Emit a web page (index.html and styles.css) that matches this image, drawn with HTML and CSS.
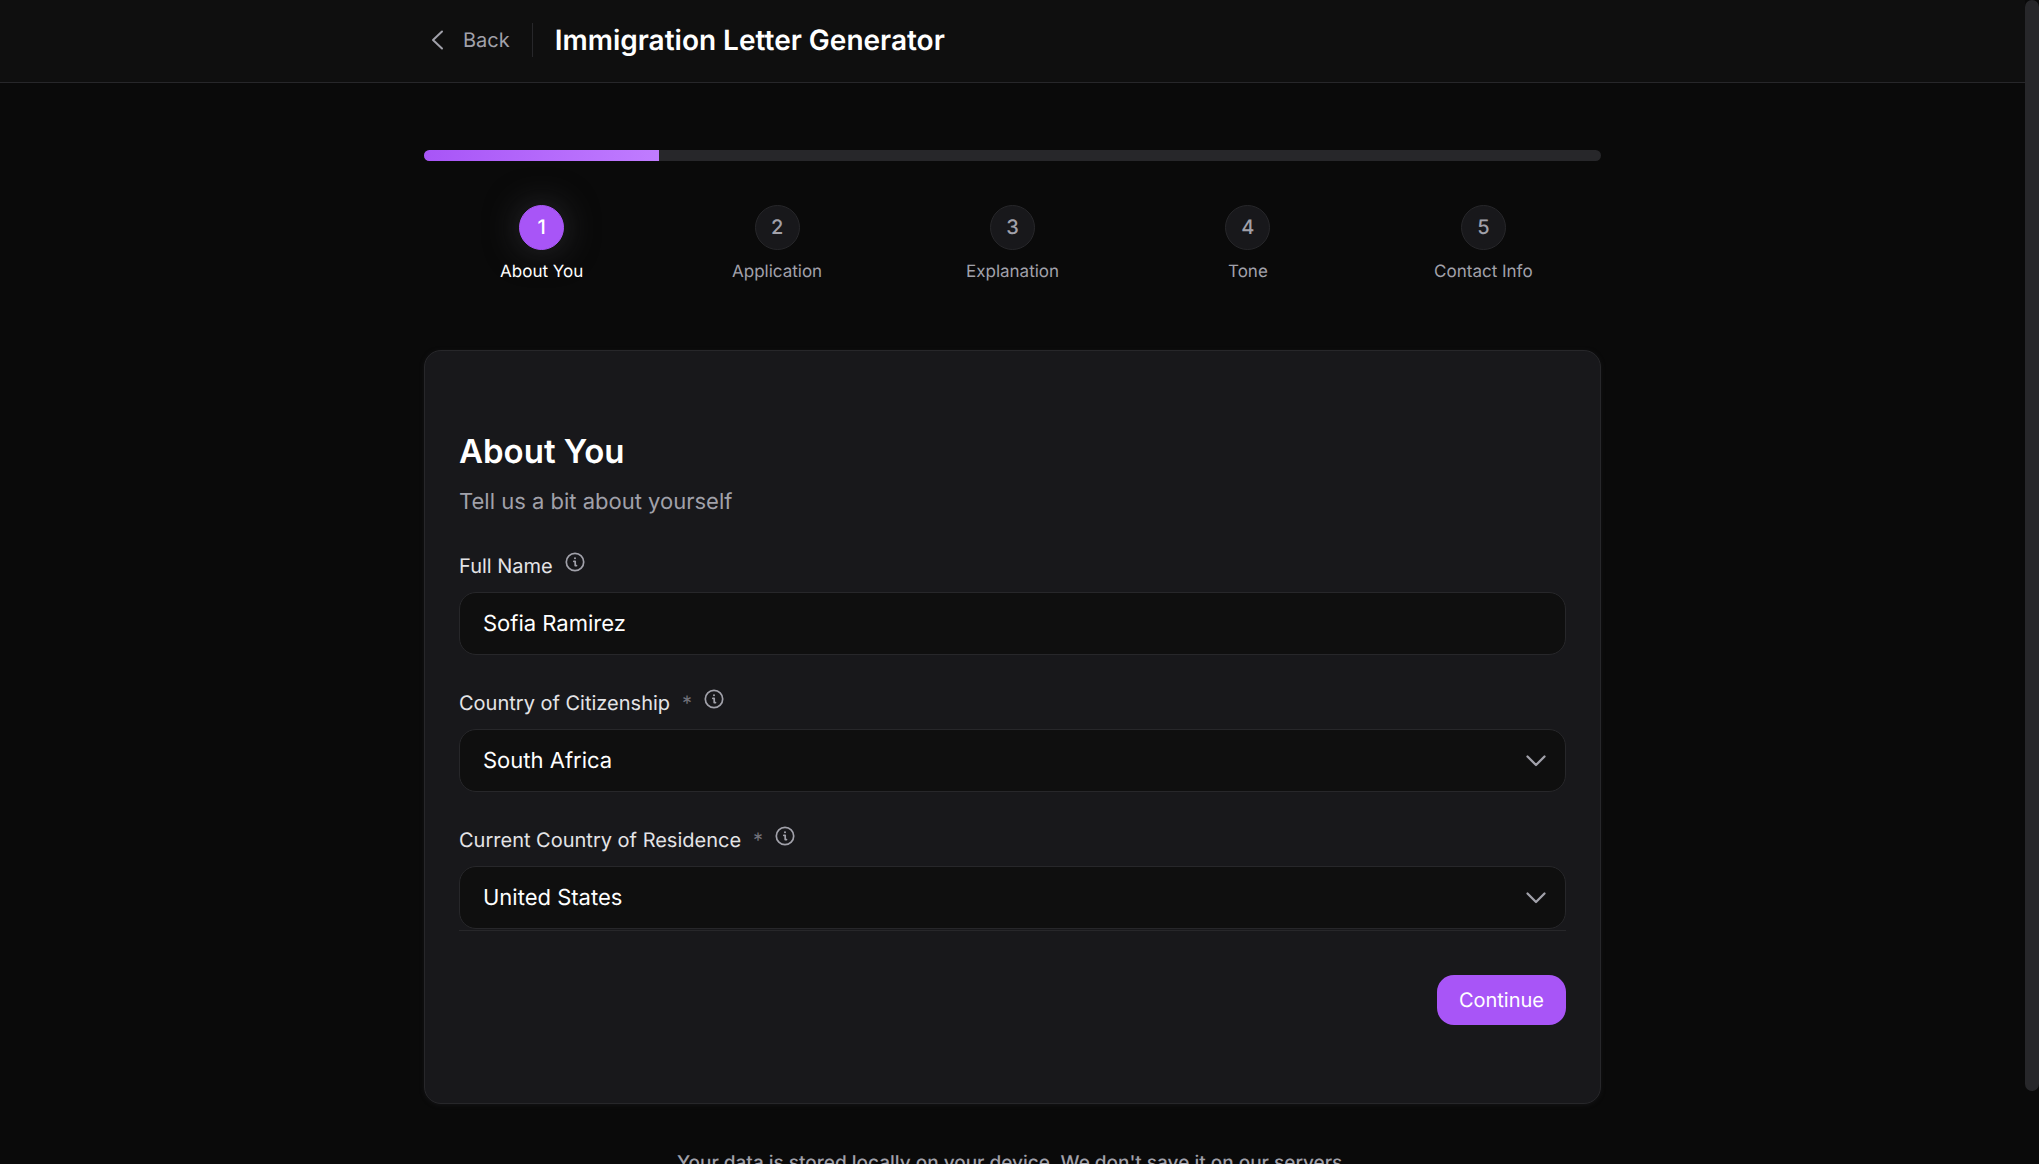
FILE: index.html
```html
<!DOCTYPE html>
<html lang="en">

<head>
    <meta charset="UTF-8">
    <meta name="viewport" content="width=device-width, initial-scale=1.0">
    <title>Immigration Letter Generator</title>
    <link rel="stylesheet" href="styles.css">
</head>

<body>
    <div class="viewport">
        <div class="page">
            <header class="topbar">
                <div class="topbar-inner">
                    <a class="back" href="#">
                        <svg width="28" height="28" viewBox="0 0 28 28" aria-hidden="true">
                            <path d="M18 5.500l-9 8.500 9 8.500" />
                        </svg>
                        Back
                    </a>
                    <h1>Immigration Letter Generator</h1>
                </div>
            </header>

            <main class="container">
                <div class="track">
                    <div class="fill" style="width: 20%"></div>
                </div>
                <ol class="steps">
                    <li class="active"><span class="dot">1</span>About You</li>
                    <li><span class="dot">2</span>Application</li>
                    <li><span class="dot">3</span>Explanation</li>
                    <li><span class="dot">4</span>Tone</li>
                    <li><span class="dot">5</span>Contact Info</li>
                </ol>

                <form class="card">
                    <h2>About You</h2>
                    <p class="sub">Tell us a bit about yourself</p>

                    <div class="field">
                        <div class="label-row">
                            <label for="name">Full Name</label>
                            <svg class="info" viewBox="0 0 20 20" aria-hidden="true">
                                <circle cx="10" cy="10" r="8.700" />
                                <path d="M8.800 9.300h1.400v4.300h1.300" />
                                <circle class="pip" cx="10" cy="6.200" r="1" />
                            </svg>
                        </div>
                        <input id="name" type="text" value="Sofia Ramirez">
                    </div>

                    <div class="field">
                        <div class="label-row">
                            <label for="citizenship">Country of Citizenship</label>
                            <span class="req">*</span>
                            <svg class="info" viewBox="0 0 20 20" aria-hidden="true">
                                <circle cx="10" cy="10" r="8.700" />
                                <path d="M8.800 9.300h1.400v4.300h1.300" />
                                <circle class="pip" cx="10" cy="6.200" r="1" />
                            </svg>
                        </div>
                        <div class="select">
                            <select id="citizenship">
                                <option>South Africa</option>
                            </select>
                            <svg class="chevron" viewBox="0 0 24 24" aria-hidden="true">
                                <path d="M3.500 7.500l8.500 8.500 8.500-8.500" />
                            </svg>
                        </div>
                    </div>

                    <div class="field">
                        <div class="label-row">
                            <label for="residence">Current Country of Residence</label>
                            <span class="req">*</span>
                            <svg class="info" viewBox="0 0 20 20" aria-hidden="true">
                                <circle cx="10" cy="10" r="8.700" />
                                <path d="M8.800 9.300h1.400v4.300h1.300" />
                                <circle class="pip" cx="10" cy="6.200" r="1" />
                            </svg>
                        </div>
                        <div class="select">
                            <select id="residence">
                                <option>United States</option>
                            </select>
                            <svg class="chevron" viewBox="0 0 24 24" aria-hidden="true">
                                <path d="M3.500 7.500l8.500 8.500 8.500-8.500" />
                            </svg>
                        </div>
                    </div>

                    <div class="actions">
                        <button type="button">Continue</button>
                    </div>
                </form>

                <p class="note">Your data is stored locally on your device. We don't save it on our servers.</p>
            </main>
        </div>
        <div class="scrollbar" aria-hidden="true">
            <div class="thumb"></div>
        </div>
    </div>
</body>

</html>
```
FILE: styles.css
```css
* {
    box-sizing: border-box;
}

body {
    margin: 0;
    background: #0a0a0a;
    color: #fff;
    font-family: Inter, "Liberation Sans", sans-serif;
    font-size: 20px;
    line-height: 28px;
    text-rendering: geometricPrecision;
}

h1, h2, p, ol {
    margin: 0;
    padding: 0;
}

svg {
    fill: none;
    stroke: #a1a1aa;
    stroke-width: 2;
    stroke-linecap: round;
    stroke-linejoin: round;
}

.viewport {
    display: flex;
    height: 100vh;
    overflow: hidden;
}

.page {
    flex: 1;
    overflow-y: auto;
    scrollbar-width: none;
}

/* scrollbar */
.scrollbar {
    width: 14px;
}

.thumb {
    height: 93.7%;
    border-radius: 7px;
    background: #27272a;
}

/* header */
.topbar {
    background: #0f0f0f;
    border-bottom: 1px solid #27272a;
}

.topbar-inner,
.container {
    max-width: 1177px;
    margin: 0 auto;
}

.topbar-inner {
    display: flex;
    align-items: center;
    height: 82px;
    padding-bottom: 2px;
}

.back {
    display: flex;
    align-items: center;
    gap: 11px;
    height: 34px;
    padding-right: 22px;
    border-right: 1px solid #27272a;
    color: #a1a1aa;
    text-decoration: none;
}

h1 {
    margin-left: 22px;
    font-size: 28px;
    font-weight: 600;
    line-height: 40px;
}

/* progress */
.track {
    height: 11px;
    margin-top: 67px;
    border-radius: 6px;
    background: #27272a;
    overflow: hidden;
}

.fill {
    height: 100%;
    background: linear-gradient(90deg, #a855f7, #c07cff);
}

.steps {
    display: flex;
    margin: 44px 0 66px;
    list-style: none;
}

.steps li {
    flex: 1;
    display: flex;
    flex-direction: column;
    align-items: center;
    gap: 10px;
    color: #a1a1aa;
    font-size: 17px;
    line-height: 24px;
}

.dot {
    width: 45px;
    height: 45px;
    border: 1px solid #27272a;
    border-radius: 50%;
    background: #18181b;
    font-size: 20px;
    font-weight: 500;
    line-height: 43px;
    text-align: center;
}

.steps .active {
    color: #fff;
}

.active .dot {
    border-color: #a855f7;
    background: #a855f7;
    box-shadow: 0 0 34px #2c2c30;
}

/* form */
.card {
    padding: 78px 34px;
    border: 1px solid #27272a;
    border-radius: 17px;
    background: #18181b;
    box-shadow: 0 1px 4px #141416;
}

h2 {
    font-size: 33px;
    font-weight: 600;
    line-height: 44px;
}

.sub {
    margin: 12px 0 33px;
    color: #a1a1aa;
    font-size: 22px;
    line-height: 34px;
}

.field + .field {
    margin-top: 34px;
}

.label-row {
    display: flex;
    gap: 12px;
    margin-bottom: 12px;
    color: #e4e4e7;
}

.req {
    color: #71717a;
}

.info {
    width: 20px;
    height: 20px;
    stroke-width: 1.700;
}

.info .pip {
    fill: #a1a1aa;
    stroke: none;
}

input,
select {
    display: block;
    width: 100%;
    height: 63px;
    padding: 0 23px;
    border: 1px solid #27272a;
    border-radius: 17px;
    background: #0f0f0f;
    color: #fff;
    font: inherit;
    font-size: 22px;
    text-rendering: inherit;
    appearance: none;
}

.select {
    position: relative;
}

.chevron {
    position: absolute;
    top: 20px;
    right: 18px;
    width: 24px;
    height: 24px;
    stroke-width: 2.300;
    pointer-events: none;
}

.actions {
    display: flex;
    justify-content: flex-end;
    margin-top: 1px;
    padding-top: 44px;
    border-top: 1px solid #27272a;
}

button {
    height: 50px;
    padding: 0 22px;
    border: 0;
    border-radius: 17px;
    background: #a855f7;
    color: #fff;
    font: inherit;
    text-rendering: inherit;
}

.note {
    margin-top: 45px;
    padding-bottom: 60px;
    color: #a1a1aa;
    font-size: 19px;
    font-weight: 500;
    text-align: center;
}
```
